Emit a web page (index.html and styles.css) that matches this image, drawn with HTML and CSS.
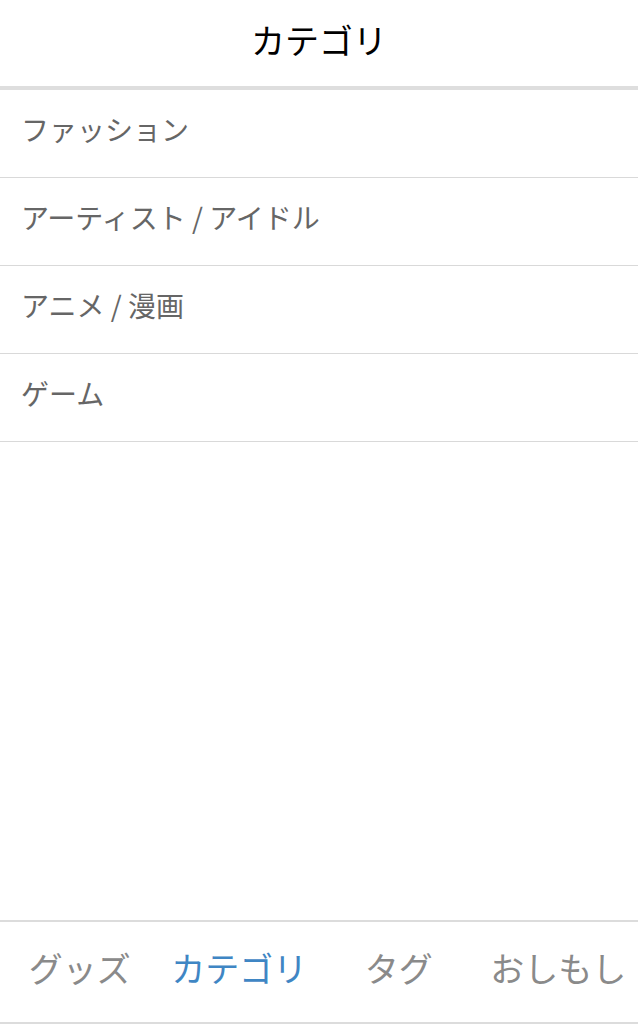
FILE: index.html
```html
<!DOCTYPE html>
<html lang="ja">
<head>
  <meta charset="UTF-8" />
  <meta name="viewport" content="width=device-width, initial-scale=1.0"/>
  <title>カテゴリ</title>
  <link rel="stylesheet" href="styles.css">
</head>
<body>
  <header class="topbar">カテゴリ</header>

  <ul class="category-list">
    <li>ファッション</li>
    <li>アーティスト / アイドル</li>
    <li>アニメ / 漫画</li>
    <li>ゲーム</li>
  </ul>

  <nav class="tabbar">
    <div class="tab">グッズ</div>
    <div class="tab active">カテゴリ</div>
    <div class="tab">タグ</div>
    <div class="tab">おしもし</div>
  </nav>
</body>
</html>
```

FILE: styles.css
```css
body {
  font-family: "Noto Sans CJK JP", "Noto Sans", sans-serif;
  background: #fff;
  margin: 0;
  padding: 0;
  height: 1024px;
  display: flex;
  flex-direction: column;
}
.topbar {
  height: 86px;
  line-height: 80px;
  text-align: center;
  font-size: 34px;
  color: #000;
  border-bottom: 4px solid #dedede;
}
.category-list {
  list-style: none;
  margin: 0;
  padding: 0;
  flex: 1;
}
.category-list li {
  height: 87px;
  line-height: 78px;
  padding-left: 21px;
  font-size: 28px;
  color: #666;
  border-bottom: 1px solid #d9d9d9;
}
.tabbar {
  display: flex;
  height: 100px;
  border-top: 2px solid #dcdcdc;
  border-bottom: 2px solid #dcdcdc;
}
.tab {
  flex: 1;
  text-align: center;
  line-height: 92px;
  font-size: 34px;
  color: #8a8a8a;
}
.tab.active {
  color: #3f86c4;
}
```
